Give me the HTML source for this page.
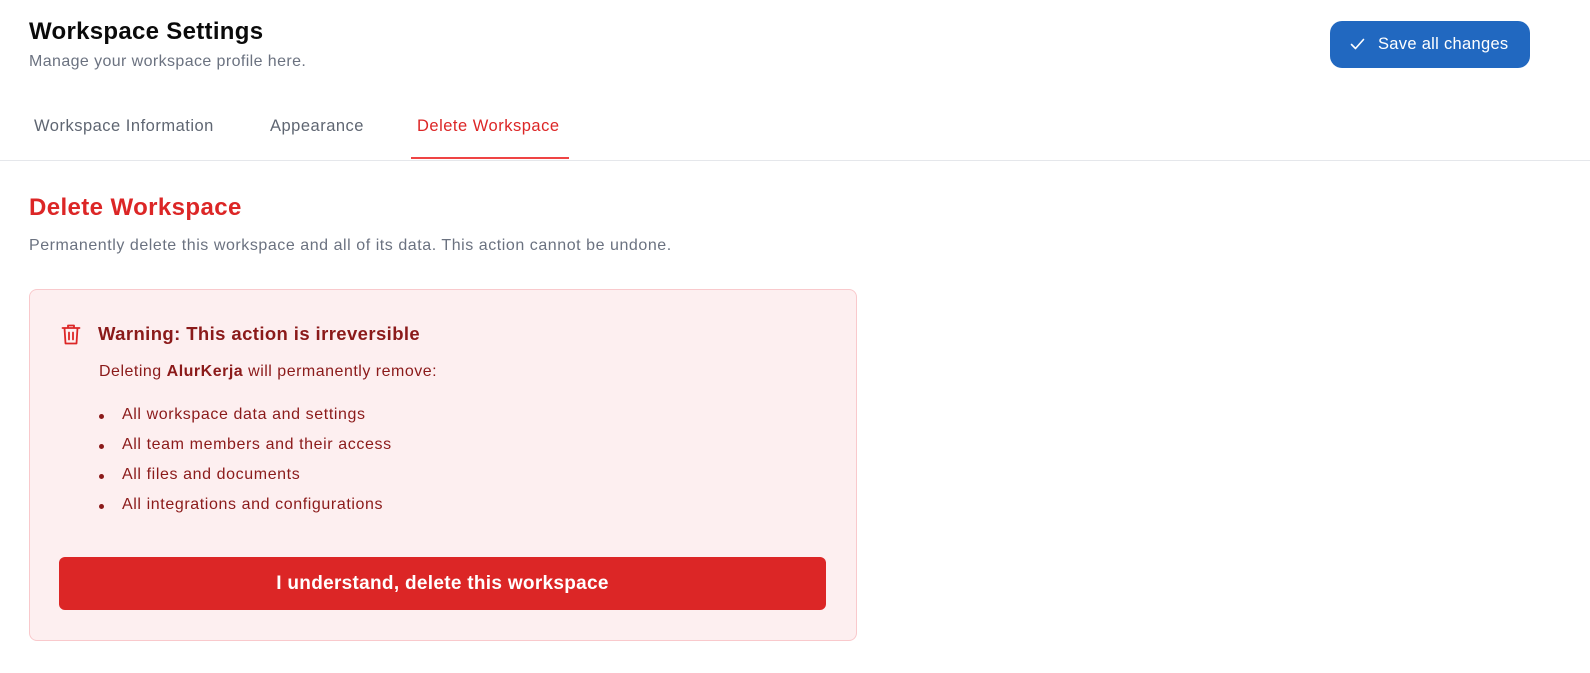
<!DOCTYPE html>
<html><head><meta charset="utf-8"><style>
*{box-sizing:border-box;margin:0;padding:0}
body{width:1590px;height:673px;background:#fff;font-family:"Liberation Sans",sans-serif;position:relative;overflow:hidden}
.a{position:absolute;white-space:nowrap}
h1{position:absolute;left:29px;top:18px;font-size:24px;font-weight:700;color:#0a0a0a;letter-spacing:0.3px}
.sub{left:29px;top:53px;font-size:16px;color:#6b7280;letter-spacing:0.4px}
.btn{position:absolute;left:1330px;top:21px;width:200px;height:47px;background:#2168c0;border-radius:12px;color:#fff;font-size:16.5px;letter-spacing:0.3px}
.tab{top:117px;font-size:16.5px;color:#5f6672;letter-spacing:0.5px}
.line{position:absolute;left:0;top:160px;width:1590px;height:1px;background:#e5e7eb}
.ul{position:absolute;left:411px;top:157px;width:158px;height:2px;background:#ef4444}
.h2{left:29px;top:194px;font-size:24px;font-weight:700;color:#dc2626;letter-spacing:0.4px}
.desc{left:29px;top:237px;font-size:16px;color:#6b7280;letter-spacing:0.55px}
.box{position:absolute;left:29px;top:289px;width:828px;height:352px;background:#fdeff0;border:1px solid #f9c9cc;border-radius:8px}
.red{color:#8b1a1a}
.del{position:absolute;left:59px;top:557px;width:767px;height:53px;background:#dc2626;border-radius:6px;color:#fff;font-size:19px;font-weight:600;text-align:center;line-height:53px;letter-spacing:0.3px}
li{position:absolute;left:99px;font-size:16px;color:#8b1a1a;list-style:none;white-space:nowrap;letter-spacing:0.6px}
li:before{content:"";position:absolute;left:0;top:8px;width:5px;height:5px;border-radius:50%;background:#8b1a1a}
li span{margin-left:23px}
</style></head><body>
<h1>Workspace Settings</h1>
<div class="a sub">Manage your workspace profile here.</div>
<div class="btn"><svg style="position:absolute;left:20px;top:17px" width="15" height="12" viewBox="0 0 15 12"><path d="M1.5 6.5 L5.5 10.5 L13.5 1.5" fill="none" stroke="#fff" stroke-width="1.6" stroke-linecap="round" stroke-linejoin="round"/></svg><span class="a" style="left:48px;top:14px">Save all changes</span></div>
<div class="a tab" style="left:34px">Workspace Information</div>
<div class="a tab" style="left:270px">Appearance</div>
<div class="a tab" style="left:417px;color:#dc2626">Delete Workspace</div>
<div class="line"></div><div class="ul"></div>
<div class="a h2">Delete Workspace</div>
<div class="a desc">Permanently delete this workspace and all of its data. This action cannot be undone.</div>
<div class="box"></div>
<svg style="position:absolute;left:61px;top:323px" width="20" height="23" viewBox="0 0 20 23"><path d="M1.5 5h17M7 5V2.5h6V5M3.5 5l1 15.5h11l1-15.5M8 9.5v7M12 9.5v7" fill="none" stroke="#dc2626" stroke-width="1.8" stroke-linecap="round" stroke-linejoin="round"/></svg>
<div class="a red" style="left:98px;top:323px;font-size:18.5px;font-weight:700;letter-spacing:0.4px">Warning: This action is irreversible</div>
<div class="a red" style="left:99px;top:363px;font-size:16px;letter-spacing:0.5px">Deleting <b>AlurKerja</b> will permanently remove:</div>
<ul>
<li style="top:406px"><span>All workspace data and settings</span></li>
<li style="top:436px"><span>All team members and their access</span></li>
<li style="top:466px"><span>All files and documents</span></li>
<li style="top:496px"><span>All integrations and configurations</span></li>
</ul>
<div class="del">I understand, delete this workspace</div>
</body></html>
